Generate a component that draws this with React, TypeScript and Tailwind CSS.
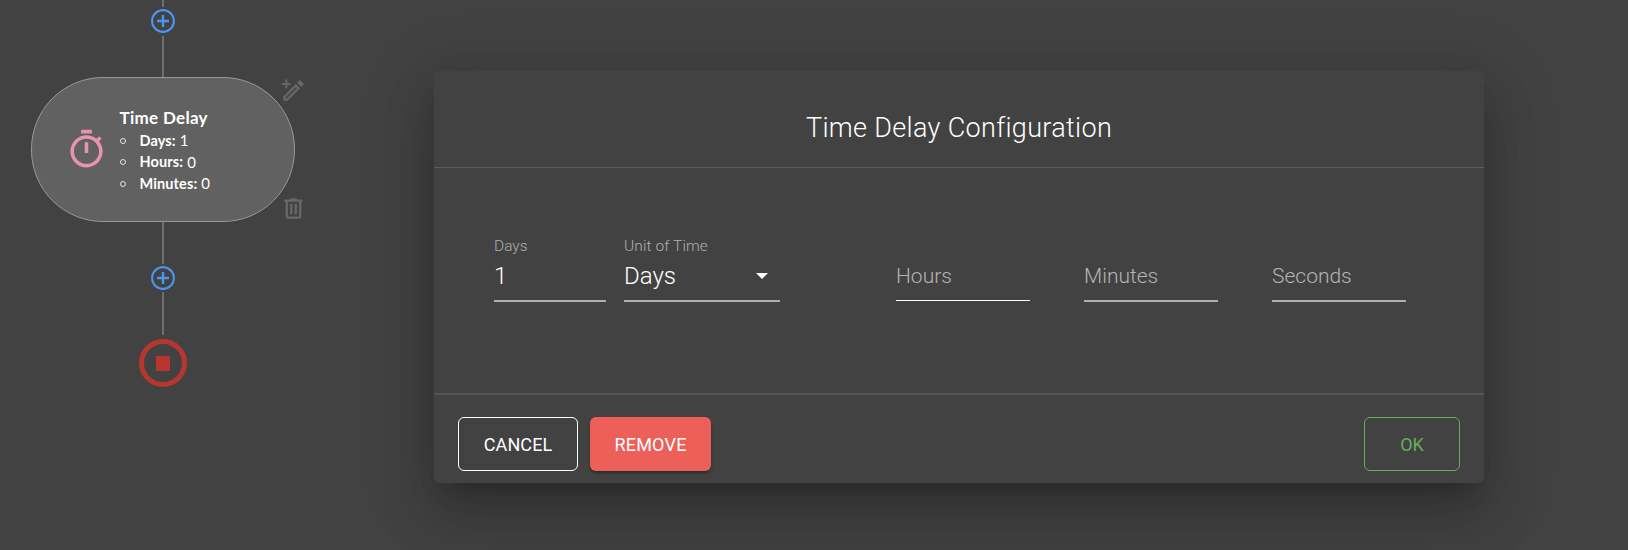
import React from "react";

const PlusCircle = () => (
  <svg viewBox="0.3 0.3 23.4 23.4" className="block size-[28px] shrink-0 fill-[#4a95ed]">
    <path d="M13 7h-2v4H7v2h4v4h2v-4h4v-2h-4V7zm-1-5C6.480 2 2 6.480 2 12s4.480 10 10 10 10-4.480 10-10S17.520 2 12 2zm0 18.200c-4.500 0-8.200-3.700-8.200-8.200s3.700-8.200 8.200-8.200 8.200 3.700 8.200 8.200-3.700 8.200-8.200 8.200z" />
  </svg>
);

const details = [
  { label: "Days:", value: "1" },
  { label: "Hours:", value: "0" },
  { label: "Minutes:", value: "0" },
];

function FlowNode() {
  return (
    <div className="relative flex h-[145px] w-[264px] shrink-0 items-center rounded-[72px] border border-[#989898] bg-[#616161] font-[Lato,sans-serif] text-white">
      <svg viewBox="0 0 24 24" className="ml-[33px] size-[43px] shrink-0 fill-[#e893b0]">
        <path d="M12,20A7,7 0 0,1 5,13A7,7 0 0,1 12,6A7,7 0 0,1 19,13A7,7 0 0,1 12,20M19.03,7.39L20.45,5.97C20,5.46 19.55,5 19.04,4.56L17.62,6C16.07,4.74 14.12,4 12,4A9,9 0 0,0 3,13A9,9 0 0,0 12,22C17,22 21,17.97 21,13C21,10.88 20.26,8.93 19.03,7.39M11,14H13V8H11M15,1H9V3H15V1Z" />
      </svg>
      <div className="ml-[11.500px] pt-px">
        <div className="text-[17px] leading-6 font-bold tracking-[0.3px]">Time Delay</div>
        <ul>
          {details.map((d) => (
            <li key={d.label} className="flex h-[21.500px] items-center text-[14.500px]">
              <span className="mr-[14px] h-[6px] w-[6px] rounded-full border border-[#e5e5e5]" />
              <b className="mr-1 font-bold tracking-[0.12px]">{d.label}</b>
              <span className="text-[15px]">{d.value}</span>
            </li>
          ))}
        </ul>
      </div>
      <svg viewBox="0 0 24 24" className="absolute top-[-1px] left-[248px] size-[27px] overflow-visible fill-[#686868]">
        <path d="M14.06,9L15,9.94L5.92,19H5V18.08L14.06,9M17.66,3C17.41,3 17.15,3.1 16.96,3.29L15.13,5.12L18.88,8.87L20.71,7.04C21.1,6.65 21.1,6 20.71,5.63L18.37,3.29C18.17,3.09 17.92,3 17.66,3M14.06,6.19L3,17.25V21H6.75L17.81,9.94L14.06,6.19Z" />
        <path d="M4.700 2.300h1.800v3h3v1.800h-3v3h-1.800v-3h-3V5.300h3z" />
      </svg>
      <svg viewBox="0 0 24 24" className="absolute top-[117px] left-[248px] size-[27px] fill-[#686868]">
        <path d="M9,3V4H4V6H5V19A2,2 0 0,0 7,21H17A2,2 0 0,0 19,19V6H20V4H15V3H9M7,6H17V19H7V6M9,8V17H11V8H9M13,8V17H15V8H13Z" />
      </svg>
    </div>
  );
}

function Field({ label, className }: { label: string; className: string }) {
  return (
    <div className={`flex w-[134px] items-center text-[21px] text-[#b4b4b4] ${className}`}>
      {label}
    </div>
  );
}

export default function App() {
  return (
    <div className="flex h-[550px] w-full items-start overflow-hidden bg-[#424242]">
      <aside className="flex h-full w-[326px] shrink-0 flex-col items-center">
        <div className="h-[7px] w-[2px] shrink-0 bg-[#6e6e6e]" />
        <div className="flex h-[29px] shrink-0 items-start">
          <PlusCircle />
        </div>
        <div className="h-[41px] w-[2px] shrink-0 bg-[#6e6e6e]" />
        <FlowNode />
        <div className="h-[42px] w-[2px] shrink-0 bg-[#6e6e6e]" />
        <div className="flex h-[28px] shrink-0 items-end">
          <PlusCircle />
        </div>
        <div className="h-[43px] w-[2px] shrink-0 bg-[#6e6e6e]" />
        <svg viewBox="0 0 48 48" className="mt-[4px] block size-[48px] shrink-0">
          <circle cx="24" cy="24" r="21.500" fill="none" stroke="#b73730" strokeWidth="5" />
          <rect x="17" y="17" width="14" height="15" fill="#b73730" />
        </svg>
      </aside>

      <section className="mt-[71px] ml-[108px] flex h-[412px] w-[1050px] shrink-0 flex-col rounded-[6px] bg-[#424242] font-[Roboto,sans-serif] font-light text-white shadow-[0_16px_22px_-10px_rgba(0,0,0,0.2),0_36px_57px_4px_rgba(0,0,0,0.14),0_14px_69px_12px_rgba(0,0,0,0.12)]">
        <header className="flex h-[97px] shrink-0 items-center justify-center border-b border-[#5c5c5c] pt-[17px]">
          <h1 className="text-[27px] leading-8 tracking-[0.33px]">Time Delay Configuration</h1>
        </header>
        <div className="flex h-[225px] shrink-0 items-start pt-[68px] pl-[60px]">
          <div className="flex h-[66px] w-[112px] flex-col border-b-2 border-[#b0b0b0]">
            <label className="h-[20px] text-[15.500px] leading-[20px] text-[#b0b0b0]">Days</label>
            <span className="pt-[5px] text-[24px] leading-[30px]">1</span>
          </div>
          <div className="ml-[18px] flex h-[66px] w-[156px] flex-col border-b-2 border-[#b0b0b0]">
            <label className="h-[20px] text-[15.500px] leading-[20px] tracking-[0.1px] text-[#b0b0b0]">Unit of Time</label>
            <div className="flex items-center pt-[5px] text-[24px] leading-[30px]">
              <span>Days</span>
              <svg viewBox="0 0 12 6" className="mr-[12px] ml-auto h-[6px] w-[12px] fill-white">
                <path d="M0 0h12L6 6z" />
              </svg>
            </div>
          </div>
          <div className="ml-[116px] flex items-start gap-[54px] pt-[17px]">
            <Field label="Hours" className="h-[48px] border-b border-white" />
            <Field label="Minutes" className="h-[49px] border-b-2 border-[#b0b0b0]" />
            <Field label="Seconds" className="h-[49px] border-b-2 border-[#b0b0b0]" />
          </div>
        </div>
        <footer className="flex h-[90px] shrink-0 items-start border-t-2 border-[#555555] px-6 pt-[22px] text-[18px] font-normal">
          <button className="h-[54px] w-[120px] rounded-[6px] border border-white tracking-[0.1px]">CANCEL</button>
          <button className="ml-3 h-[54px] w-[121px] rounded-[6px] bg-[#ed6059] tracking-[0.2px] shadow-[0_2px_3px_rgba(0,0,0,0.35)]">REMOVE</button>
          <button className="ml-auto h-[54px] w-[96px] rounded-[6px] border border-[#66ad5b] text-[#66ad5b]">OK</button>
        </footer>
      </section>
    </div>
  );
}
